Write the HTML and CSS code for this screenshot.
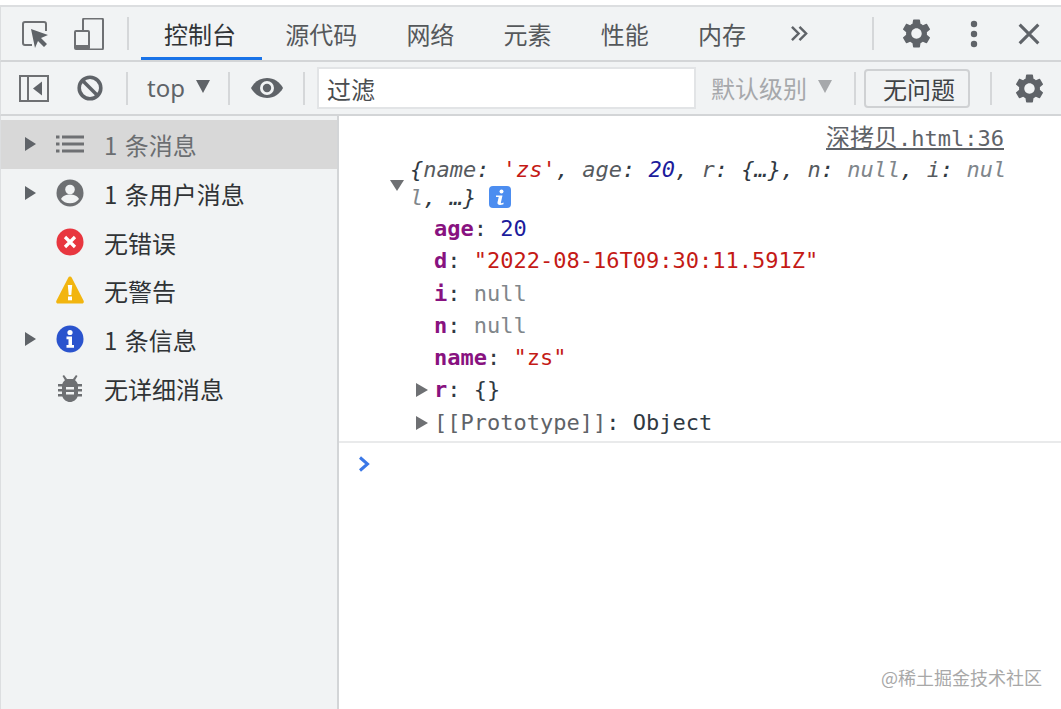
FILE: index.html
```html
<!DOCTYPE html>
<html lang="zh-CN">
<head>
<meta charset="utf-8">
<title>DevTools</title>
<link rel="stylesheet" href="styles.css">
</head>
<body>
<div class="app">
  <header class="tabbar">
    <svg class="ic ic-inspect" viewBox="0 0 28 28"><path d="M11 25H4a2 2 0 0 1-2-2V4a2 2 0 0 1 2-2h19a2 2 0 0 1 2 2v7" fill="none" stroke="#6e7073" stroke-width="2"/><path d="M10 9l17 6-7 3 6 6-3 3-6-6-3 7z" fill="#5f6368"/></svg>
    <svg class="ic ic-device" viewBox="0 0 30 32"><path d="M9 12V2a1.500 1.500 0 0 1 1.500-1.500h17A1.500 1.500 0 0 1 29 2v28a1.500 1.500 0 0 1-1.500 1.500H14" fill="none" stroke="#6e7073" stroke-width="2"/><rect x="1" y="13" width="14" height="18" rx="1" fill="none" stroke="#6e7073" stroke-width="2"/><rect x="1" y="27" width="14" height="4" fill="#6e7073"/></svg>
    <span class="vline vline-tabs"></span>
    <nav class="tabs">
      <span class="tab tab-active">控制台</span>
      <span class="tab">源代码</span>
      <span class="tab">网络</span>
      <span class="tab">元素</span>
      <span class="tab">性能</span>
      <span class="tab">内存</span>
    </nav>
    <svg class="ic ic-more" viewBox="0 0 20 18"><path d="M2 2l7 7-7 7M10 2l7 7-7 7" fill="none" stroke="#5f6368" stroke-width="2.600"/></svg>
    <span class="vline vline-right"></span>
    <svg class="ic ic-gear" viewBox="2 2 20 20"><path d="M19.140 12.940c.04-.3.06-.61.06-.94 0-.32-.02-.64-.07-.94l2.030-1.580a.49.49 0 0 0 .12-.61l-1.920-3.320a.488.488 0 0 0-.59-.22l-2.390.96c-.5-.38-1.030-.7-1.620-.94l-.36-2.540a.484.484 0 0 0-.48-.41h-3.840c-.24 0-.43.17-.47.41l-.36 2.540c-.59.24-1.130.57-1.620.94l-2.390-.96c-.22-.08-.47 0-.59.22L2.740 8.870c-.12.21-.08.47.12.61l2.030 1.580c-.05.3-.09.63-.09.94s.02.64.07.94l-2.030 1.580a.49.49 0 0 0-.12.61l1.920 3.320c.12.22.37.29.59.22l2.390-.96c.5.38 1.030.7 1.620.94l.36 2.540c.05.24.24.41.48.41h3.840c.24 0 .44-.17.47-.41l.36-2.540c.59-.24 1.130-.56 1.620-.94l2.390.96c.22.08.47 0 .59-.22l1.920-3.320c.12-.22.07-.47-.12-.61l-2.010-1.580zM12 15.600c-1.980 0-3.600-1.620-3.600-3.600s1.620-3.600 3.600-3.600 3.600 1.620 3.600 3.600-1.620 3.600-3.600 3.600z" fill="#5f6368"/></svg>
    <svg class="ic ic-dots" viewBox="0 0 8 28"><circle cx="4" cy="4" r="3.200" fill="#5f6368"/><circle cx="4" cy="14" r="3.200" fill="#5f6368"/><circle cx="4" cy="24" r="3.200" fill="#5f6368"/></svg>
    <svg class="ic ic-close" viewBox="0 0 20 20"><path d="M1.500 1.500l17 17M18.500 1.500l-17 17" stroke="#5f6368" stroke-width="2.800" fill="none"/></svg>
  </header>

  <div class="toolbar">
    <svg class="ic ic-panel" viewBox="0 0 30 27"><rect x="1" y="1" width="28" height="25" fill="none" stroke="#6e7073" stroke-width="2"/><path d="M9 1v25" stroke="#6e7073" stroke-width="2"/><path d="M23 6.500v14l-9-7z" fill="#5f6368"/></svg>
    <svg class="ic ic-block" viewBox="0 0 26 26"><circle cx="13" cy="13" r="10.800" fill="none" stroke="#5f6368" stroke-width="3.600"/><path d="M5.500 5.500l15 15" stroke="#5f6368" stroke-width="3.600"/></svg>
    <span class="vline vline-t1"></span>
    <span class="top-label">top</span>
    <span class="tri-down"></span>
    <span class="vline vline-t2"></span>
    <svg class="ic ic-eye" viewBox="0 0 32 20"><path d="M16 0C9 0 3.200 4 0 10c3.200 6 9 10 16 10s12.800-4 16-10C28.800 4 23 0 16 0z" fill="#5f6368"/><circle cx="16" cy="10" r="7" fill="#f1f3f4"/><circle cx="16" cy="10" r="4.200" fill="#5f6368"/></svg>
    <span class="vline vline-t3"></span>
    <div class="filter">过滤</div>
    <span class="level">默认级别</span>
    <span class="tri-down tri-light"></span>
    <span class="vline vline-t4"></span>
    <div class="issues">无问题</div>
    <span class="vline vline-t5"></span>
    <svg class="ic ic-gear2" viewBox="2 2 20 20"><path d="M19.140 12.940c.04-.3.06-.61.06-.94 0-.32-.02-.64-.07-.94l2.030-1.580a.49.49 0 0 0 .12-.61l-1.920-3.320a.488.488 0 0 0-.59-.22l-2.390.96c-.5-.38-1.030-.7-1.620-.94l-.36-2.540a.484.484 0 0 0-.48-.41h-3.840c-.24 0-.43.17-.47.41l-.36 2.540c-.59.24-1.130.57-1.620.94l-2.390-.96c-.22-.08-.47 0-.59.22L2.740 8.870c-.12.21-.08.47.12.61l2.030 1.580c-.05.3-.09.63-.09.94s.02.64.07.94l-2.030 1.580a.49.49 0 0 0-.12.61l1.920 3.320c.12.22.37.29.59.22l2.390-.96c.5.38 1.030.7 1.620.94l.36 2.540c.05.24.24.41.48.41h3.840c.24 0 .44-.17.47-.41l.36-2.540c.59-.24 1.130-.56 1.620-.94l2.390.96c.22.08.47 0 .59-.22l1.920-3.320c.12-.22.07-.47-.12-.61l-2.010-1.580zM12 15.600c-1.980 0-3.600-1.620-3.600-3.600s1.620-3.600 3.600-3.600 3.600 1.620 3.600 3.600-1.620 3.600-3.600 3.600z" fill="#5f6368"/></svg>
  </div>

  <div class="body">
    <aside class="sidebar">
      <div class="row row-selected">
        <span class="tri-right"></span>
        <svg class="sic" viewBox="0 0 28 28"><path d="M0 5.500h3.500v3H0zM0 12.500h3.500v3H0zM0 19.500h3.500v3H0zM6 5.500h22v3H6zM6 12.500h22v3H6zM6 19.500h22v3H6z" fill="#6e7073"/></svg>
        <span class="row-text text-muted">1 条消息</span>
      </div>
      <div class="row">
        <span class="tri-right"></span>
        <svg class="sic" viewBox="0 0 28 28"><circle cx="14" cy="14" r="13.500" fill="#6e7073"/><circle cx="14" cy="10.500" r="4.800" fill="#f1f3f4"/><path d="M5 20c2-3.500 5.500-4.500 9-4.500s7 1 9 4.500c-2 2.800-5.200 4.200-9 4.200s-7-1.400-9-4.200z" fill="#f1f3f4"/></svg>
        <span class="row-text">1 条用户消息</span>
      </div>
      <div class="row">
        <span class="tri-none"></span>
        <svg class="sic" viewBox="0 0 28 28"><circle cx="14" cy="14" r="13.500" fill="#e8363f"/><path d="M9 9l10 10M19 9L9 19" stroke="#fff" stroke-width="3.200"/></svg>
        <span class="row-text">无错误</span>
      </div>
      <div class="row">
        <span class="tri-none"></span>
        <svg class="sic" viewBox="0 0 28 28"><path d="M14 .5c.8 0 1.400.4 1.800 1.200l11.800 23c.6 1.300-.1 2.800-1.600 2.800H2C.5 27.500-.2 26 .4 24.700l11.800-23C12.600.9 13.200.5 14 .5z" fill="#f2b50f"/><path d="M11.800 9h4.400l-.9 10h-2.600z" fill="#fff"/><rect x="12" y="20.500" width="4" height="3.800" fill="#fff"/></svg>
        <span class="row-text">无警告</span>
      </div>
      <div class="row">
        <span class="tri-right"></span>
        <svg class="sic" viewBox="0 0 28 28"><circle cx="14" cy="14" r="13.500" fill="#2a53cd"/><circle cx="14" cy="7.500" r="2.600" fill="#fff"/><path d="M10.500 11.500H16V20h2v2.800H10.500V20h2v-5.700h-2z" fill="#fff"/></svg>
        <span class="row-text">1 条信息</span>
      </div>
      <div class="row">
        <span class="tri-none"></span>
        <svg class="sic" viewBox="0 0 28 28"><path d="M8 1l3 4h6l3-4 1.500 1-2.500 4.200c1 .7 1.800 1.500 2.300 2.800H6.700c.5-1.300 1.300-2.100 2.300-2.800L6.500 2z" fill="#6e7073"/><path d="M2 10h4l1-1h14l1 1h4v2.500h-4V15h4v2.500h-4V20h4v2.500h-4.300C20.500 25.500 17.500 28 14 28s-6.500-2.500-7.700-5.500H2V20h4v-2.500H2V15h4v-2.500H2z" fill="#6e7073"/><path d="M10 13h8v2.500h-8zM10 18h8v2.500h-8z" fill="#f1f3f4"/></svg>
        <span class="row-text">无详细消息</span>
      </div>
    </aside>

    <main class="console">
      <div class="message">
        <div class="source"><span class="source-link"><span class="cjk">深拷贝</span>.html:36</span></div>
        <div class="summary">
          <span class="tri-open"></span>
          <div class="summary-text"><span class="dark">{</span><span class="key-i">name</span><span class="dark">: </span><span class="str">'zs'</span><span class="dark">, </span><span class="key-i">age</span><span class="dark">: </span><span class="num">20</span><span class="dark">, </span><span class="key-i">r</span><span class="dark">: {…}, </span><span class="key-i">n</span><span class="dark">: </span><span class="null">null</span><span class="dark">, </span><span class="key-i">i</span><span class="dark">: </span><span class="null">null</span><span class="dark">, …}</span><svg class="badge" viewBox="0 0 22 22"><rect width="22" height="22" rx="4" fill="#4c8df0"/><circle cx="12.500" cy="5.500" r="2" fill="#fff"/><path d="M7 9.500h6.500l-1.600 7c-.1.700.5 1 2.600 0v1.700c-3 1.300-6.600 1.300-6-1.900L9.700 11H7z" fill="#fff"/></svg></div>
        </div>
        <div class="props">
          <div class="prop"><span class="key">age</span>: <span class="num">20</span></div>
          <div class="prop"><span class="key">d</span>: <span class="str">"2022-08-16T09:30:11.591Z"</span></div>
          <div class="prop"><span class="key">i</span>: <span class="null">null</span></div>
          <div class="prop"><span class="key">n</span>: <span class="null">null</span></div>
          <div class="prop"><span class="key">name</span>: <span class="str">"zs"</span></div>
          <div class="prop"><span class="tri-small"></span><span class="key">r</span>: {}</div>
          <div class="prop"><span class="tri-small"></span><span class="proto">[[Prototype]]</span>: Object</div>
        </div>
      </div>
      <div class="prompt">
        <svg class="chevron" viewBox="0 0 12 16"><path d="M2 1.500L9.500 8 2 14.500" fill="none" stroke="#3b78e7" stroke-width="3"/></svg>
      </div>
      <div class="watermark">@稀土掘金技术社区</div>
    </main>
  </div>
</div>
</body>
</html>
```
FILE: styles.css
```css
* { box-sizing: border-box; }
html, body { margin: 0; padding: 0; }
body {
  width: 1061px;
  height: 709px;
  overflow: hidden;
  background: #fff;
  font-family: "Noto Sans CJK SC", "Noto Sans", sans-serif;
  font-size: 24px;
  color: #303336;
}
.app { display: flex; flex-direction: column; height: 709px; padding-top: 5px; }

.tabbar {
  display: flex;
  align-items: center;
  height: 57px;
  flex: none;
  background: #f1f3f4;
  border-top: 2px solid #dcdee0;
  border-bottom: 2px solid #d3d5d7;
  border-left: 1px solid #dcdee0;
}
.ic { display: block; flex: none; }
.ic-inspect { width: 28px; height: 28px; margin: 0 0 0 20px; }
.ic-device { width: 30px; height: 32px; margin-left: 25px; }
.vline { display: block; flex: none; width: 2px; background: #d5d7d9; height: 33px; }
.vline-tabs { margin-left: 23px; }
.tabs { display: flex; height: 100%; margin-left: 12px; }
.tab {
  display: flex;
  align-items: center;
  padding: 0 26.200px 0 23px;
  color: #55585b;
  border-bottom: 3px solid transparent;
  border-top: 3px solid transparent;
  white-space: nowrap;
}
.tab-active { color: #303336; border-bottom-color: #1a73e8; }
.ic-more { width: 19px; height: 17px; margin-left: 18px; }
.vline-right { margin-left: 63px; }
.ic-gear { width: 29px; height: 29px; margin-left: 28px; }
.ic-dots { width: 8px; height: 28px; margin-left: 39px; }
.ic-close { width: 22px; height: 22px; margin-left: 40px; }

.toolbar {
  display: flex;
  align-items: center;
  height: 54px;
  flex: none;
  background: #f1f3f4;
  border-bottom: 2px solid #d3d5d7;
  border-left: 1px solid #dcdee0;
}
.ic-panel { width: 30px; height: 27px; margin-left: 18px; }
.ic-block { width: 26px; height: 26px; margin-left: 28px; }
.vline-t1 { margin-left: 23px; }
.top-label { font-family: "Noto Sans", sans-serif; color: #5f6368; margin-left: 19px; line-height: 1; width: 37px; }
.tri-down {
  flex: none;
  width: 0; height: 0;
  margin-left: 12px;
  margin-bottom: 4px;
  border-left: 7.500px solid transparent;
  border-right: 7.500px solid transparent;
  border-top: 13px solid #5f6368;
}
.vline-t2 { margin-left: 18px; }
.ic-eye { width: 32px; height: 20px; margin-left: 21px; }
.vline-t3 { margin-left: 20px; }
.filter {
  flex: none;
  width: 379px;
  height: 42px;
  margin-left: 12px;
  padding-left: 8px;
  background: #fff;
  border: 2px solid #e2e4e6;
  line-height: 40px;
  color: #4a4d50;
}
.level { color: #a6a8ab; margin-left: 15px; line-height: 1; white-space: nowrap; }
.tri-light { border-top-color: #a6a8ab; margin-left: 11px; }
.vline-t4 { margin-left: 22px; }
.issues {
  flex: none;
  width: 106px;
  height: 39px;
  margin-left: 8px;
  padding-left: 4px;
  border: 2px solid #cfd1d3;
  border-radius: 4px;
  text-align: center;
  line-height: 36px;
  color: #404346;
}
.vline-t5 { margin-left: 20px; }
.ic-gear2 { width: 29px; height: 29px; margin-left: 23px; }

.body { flex: 1; display: flex; min-height: 0; }
.sidebar {
  flex: none;
  width: 339px;
  padding-top: 4px;
  background: #f1f3f4;
  border-right: 2px solid #d3d5d7;
  border-left: 1px solid #dcdee0;
}
.row { display: flex; align-items: center; height: 48.700px; padding-left: 24px; }
.row-selected { background: #d8d8d8; }
.tri-right {
  flex: none;
  width: 0; height: 0;
  border-top: 7px solid transparent;
  border-bottom: 7px solid transparent;
  border-left: 11px solid #5f6368;
}
.tri-none { flex: none; width: 11px; }
.sic { flex: none; width: 28px; height: 28px; margin-left: 20px; }
.row-text { margin: 2px 0 0 20px; line-height: 1; white-space: nowrap; word-spacing: 2px; color: #303336; }
.text-muted { color: #6b6e71; }

.console { flex: 1; position: relative; min-width: 0; background: #fff; }
.message {
  height: 327px;
  border-bottom: 2px solid #e9eaeb;
  font-family: "DejaVu Sans Mono", "Noto Sans CJK SC", monospace;
  font-size: 22px;
  color: #303942;
}
.source { height: 40px; padding: 6px 57px 0 0; text-align: right; line-height: 28px; }
.source-link { color: #5f6368; text-decoration: underline; white-space: nowrap; }
.cjk { font-family: "Noto Sans CJK SC", sans-serif; font-size: 24px; }
.summary { display: flex; padding-left: 51px; }
.tri-open {
  flex: none;
  width: 0; height: 0;
  margin-top: 24px;
  border-left: 7px solid transparent;
  border-right: 7px solid transparent;
  border-top: 11px solid #6e7073;
}
.summary-text {
  width: 600px;
  margin-left: 6px;
  line-height: 28px;
  font-style: italic;
  word-break: break-all;
}
.dark { color: #303942; }
.key-i { color: #565a5e; }
.str { color: #c41a16; }
.num { color: #1c1c9c; }
.null { color: #80868b; }
.key { color: #881280; font-weight: bold; }
.proto { color: #5f6368; }
.badge {
  display: inline-block;
  width: 22px;
  height: 22px;
  margin-left: 13px;
  vertical-align: -3px;
}
.props { padding-left: 95px; margin-top: 1px; }
.prop { position: relative; height: 32.300px; line-height: 32.300px; white-space: pre; }
.tri-small {
  position: absolute;
  left: -18px;
  top: 9px;
  width: 0; height: 0;
  border-top: 7px solid transparent;
  border-bottom: 7px solid transparent;
  border-left: 12px solid #6e7073;
}
.prompt { padding: 13px 0 0 19px; }
.chevron { display: block; width: 12px; height: 16px; }
.watermark {
  position: absolute;
  right: 19px;
  bottom: 19px;
  font-size: 18px;
  line-height: 26px;
  color: #a8a8a8;
  white-space: nowrap;
}
```
